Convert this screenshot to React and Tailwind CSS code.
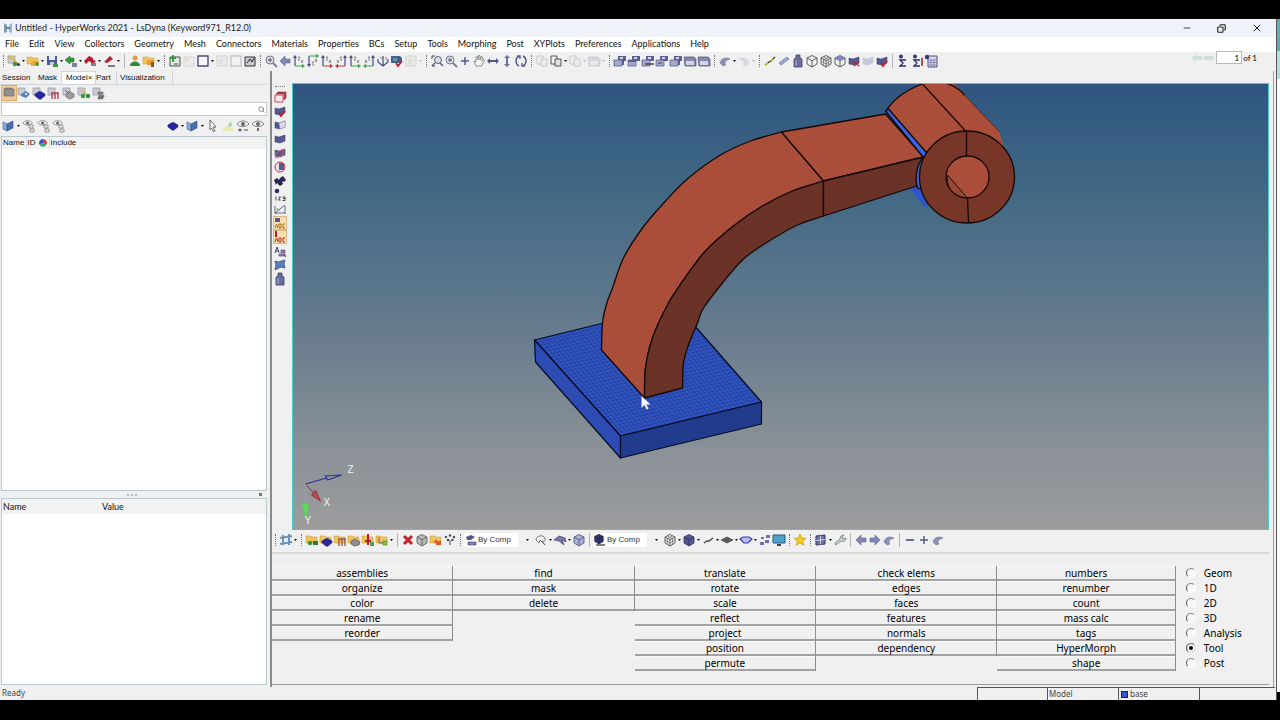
import { useState } from 'react';
import { Minus, X, Copy, Search } from 'lucide-react';

// Small shapes shared by several toolbar glyphs
const Folder = () => <path d="M1 3h5l1 1h5v6H1z" fill="#f0c35c" stroke="#c9973a" strokeWidth=".5" />;
const Page = () => <path d="M1 2h7v7H1z" fill="#c9ccd6" stroke="#8f93a3" strokeWidth=".7" />;
const Check = () => <path d="M6 9l2 3 4-5" fill="none" stroke="#c01f2c" strokeWidth="1.8" />;
const Slab = () => <path d="M2 4l4 1 6-2v6l-5 2-5-1z" fill="#55588f" stroke="#33366b" strokeWidth=".5" />;
const Cube = ({ fill = 'none', stroke = '#3c3c3c' }) => (
    <>
        <path d="M7 1.500l5 2.500v6l-5 3-5-3V4z" fill={fill} stroke={stroke} strokeWidth=".8" />
        <path d="M2 4l5 2.700 5-2.700M7 6.700V13" fill="none" stroke={stroke} strokeWidth=".8" />
    </>
);
const Disc = ({ fill = '#26269e' }) => (
    <path d="M1 6l5-3h2l5 3v2l-5 4H6L1 8z" fill={fill} stroke="#14145c" strokeWidth=".5" />
);
const Axes = ({ color, flip }) => (
    <g transform={flip ? 'matrix(-1 0 0 1 14 0)' : undefined}>
        <path d="M3 12V2M1.500 4L3 2l1.500 2" fill="none" stroke="#4a4a8a" strokeWidth="1.200" />
        <path d="M3 12h9M10 10.500l2 1.500-2 1.500" fill="none" stroke={color} strokeWidth="1.200" />
        <path d="M6 3h2l-2 3h2M9 6l2 3M11 6L9 9" fill="none" stroke="#666" strokeWidth=".7" />
    </g>
);
const Panes = ({ children }) => (
    <>
        <path d="M5 2h8v5H5z" fill="#5c5f94" />
        <path d="M7 3h3v2H7z" fill="#d5d7e8" />
        <path d="M1 6h8v6H1z" fill="#a4a8c8" stroke="#5c5f94" strokeWidth=".8" />
        {children}
    </>
);
const Undo = () => <path d="M2 9c1-5 6-6 10-4l-2 1c-2 0-3 1-3 4l1 1-3 1-2-2z" fill="#8c90b8" stroke="#65688f" strokeWidth=".5" />;
const Eye = () => (
    <>
        <path d="M1 5c3-4 9-4 12 0-3 3.500-9 3.500-12 0z" fill="#f4f4f4" stroke="#666" strokeWidth=".8" />
        <circle cx="7" cy="5" r="2" fill="#666" />
    </>
);
const Sigma = () => (
    <>
        <circle cx="5" cy="2.500" r="2" fill="#35357e" />
        <path d="M10 6H4l3 3-3 3h6" fill="none" stroke="#2d2d66" strokeWidth="1.300" />
    </>
);

const GLYPHS = {
    newModel: <><Page /><path d="M2 2l9 8" stroke="#e0b53c" strokeWidth="2" /><circle cx="8" cy="10" r="2.300" fill="#3d9b3a" /><circle cx="11.500" cy="10.500" r="1.600" fill="#35357e" /></>,
    open: <><Folder /><path d="M5 7h8v5H5z" fill="#e7a93b" /><circle cx="11" cy="10" r="1.800" fill="#3d9b3a" /></>,
    save: <><path d="M2 2h10v9H2z" fill="#4d5c96" /><path d="M4 2h6v4H4z" fill="#e8eaf4" /><path d="M5 8h4v3H5z" fill="#c8ccdf" /><path d="M8 10h5v3H8z" fill="#3d9b3a" /></>,
    importFile: <><path d="M1 6l5-4v2h4v4H6v2z" fill="#2f9a3a" stroke="#196b22" strokeWidth=".5" /><path d="M8 9h5v4H8z" fill="#7b8299" /></>,
    exportFile: <><path d="M1 7l5-5 4 2v2l3 1-3 3-4-3-3 3z" fill="#b51e2e" /><path d="M8 9h5v3H8z" fill="#7b8299" /></>,
    publish: <><path d="M2 8l6-6 3 3-6 4z" fill="#b51e2e" /><path d="M6 12h7" stroke="#555" strokeWidth="1.500" /></>,
    user: <><circle cx="7" cy="4" r="2.500" fill="#e39b3c" /><path d="M2 12c0-6 10-6 10 0z" fill="#2f8a3a" /></>,
    folders: <><Folder /><path d="M5 6h7v5H5z" fill="#f0982f" /><path d="M9 8h3v5H9z" fill="#8b5a2b" /></>,
    addPage: <><path d="M2 3h10v9H2z" fill="#dfe7df" stroke="#44544c" /><path d="M5 1v7M2 4h6" stroke="#2f9a3a" strokeWidth="1.800" /><path d="M6 10h4" stroke="#555" /></>,
    delPage: <><path d="M2 3h10v9H2z" fill="#e8e8e8" stroke="#888" /><path d="M3 4l4 4M7 4L3 8" stroke="#c0606a" /></>,
    layout: <path d="M2 2h10v10H2z" fill="#f7f7fb" stroke="#4a4d78" strokeWidth="1.400" />,
    panel: <><path d="M2 2h10v10H2z" fill="#e0e0e0" stroke="#777" /><path d="M4 5h4v5H4z" fill="#aaa" /></>,
    reload: <><path d="M2 3h10v9H2z" fill="#c9c9d2" stroke="#333" /><path d="M4 9l3-4 2 3 2-4" fill="none" stroke="#222" /></>,
    zoomIn: <><circle cx="6" cy="6" r="4" fill="#dadde6" stroke="#777a94" /><path d="M9 9l4 4" stroke="#777a94" strokeWidth="1.800" /><path d="M4 6h4M6 4v4" stroke="#555" /></>,
    back: <path d="M2 7l5-5v3h5v4H7v3z" fill="#8087b5" stroke="#5b6191" strokeWidth=".6" />,
    forward: <path d="M12 7L7 2v3H2v4h5v3z" fill="#8087b5" stroke="#5b6191" strokeWidth=".6" />,
    axXZ: <Axes color="#3aa549" />,
    axXZflip: <g transform="matrix(1 0 0 -1 0 14)"><Axes color="#3aa549" /></g>,
    axZX: <Axes color="#b8323c" />,
    axZXflip: <Axes color="#b8323c" flip />,
    axYZ: <Axes color="#3aa549" />,
    axYZflip: <Axes color="#3aa549" flip />,
    axIso: <><path d="M7 12V2M7 12L2 8V5M7 12l5-4V5" fill="none" stroke="#4a4a8a" strokeWidth="1.200" /><path d="M4 3l2 2M10 3v3" stroke="#666" strokeWidth=".8" /></>,
    viewCheck: <><path d="M1 2h9l2 2v5H1z" fill="#4a5d8c" /><path d="M3 4h4v3H3z" fill="#58a0a0" /><Check /></>,
    zoomBox: <><path d="M2 2h3M2 2v3M2 12h3" stroke="#444" fill="none" /><circle cx="8" cy="6" r="3.500" fill="#d8dae8" stroke="#5a5d80" /><path d="M5 9l-3 3M10 9l3 3" stroke="#5a5d80" strokeWidth="1.500" /></>,
    plus: <path d="M7 3v8M3 7h8" stroke="#55588f" strokeWidth="1.500" />,
    minus: <path d="M3 7h8" stroke="#55588f" strokeWidth="1.800" />,
    hand: <path d="M4 12L2 7l2 1V3l1.500-.5L6 6l.5-4.500 1.500 0V6l1-3.500 1.500.5-.5 4 1.500-1.500 1 .5-3 6z" fill="#f5f5f5" stroke="#777" strokeWidth=".8" />,
    arrowsH: <path d="M1 7l3-3v2h6V4l3 3-3 3V8H4v2z" fill="#55588f" />,
    arrowsV: <path d="M7 1l3 3H8v6h2l-3 3-3-3h2V4H4z" fill="#6b6ea0" />,
    rotate: <path d="M5 2C1 4 1 10 5 12M9 2c4 2 4 8 0 10M3 2h3v3M11 12H8V9" fill="none" stroke="#55588f" strokeWidth="1.400" />,
    pages: <><path d="M2 2h6v8H2z" fill="#f4f4f4" stroke="#555" /><path d="M6 5h6v7H6z" fill="#e2e2ea" stroke="#555" /></>,
    win1: <Panes><path d="M10 7v4" stroke="#5c5f94" strokeWidth="2" /></Panes>,
    win2: <Panes><path d="M1 6h8v2H1z" fill="#5c5f94" /></Panes>,
    win3: <Panes><path d="M4 10h9" stroke="#444" strokeWidth="1.500" /></Panes>,
    win4: <Panes><path d="M3 9h4" stroke="#444" /></Panes>,
    win5: <><path d="M1 3h10l2 2v7H2z" fill="#8588ae" stroke="#4b4e7a" strokeWidth=".7" /><path d="M3 7h8v4H3z" fill="#d3d5e4" /></>,
    undo: <Undo />,
    redo: <g transform="matrix(-1 0 0 1 14 0)"><Undo /></g>,
    line: <><path d="M2 11l4-3 2-1 4-4" stroke="#3a3a2a" strokeWidth="1.300" fill="none" /><path d="M2 11l3-2M8 7l2-2" stroke="#b6c420" strokeWidth="2" /></>,
    beam: <path d="M2 9l8-6 2 2-8 6z" fill="#a4a8d4" stroke="#6b6ea0" strokeWidth=".7" />,
    bottle: <><path d="M5 1h4v3l2 1v8H3V5l2-1z" fill="#6a6d9c" stroke="#3d3f6c" strokeWidth=".8" /><path d="M5 6v6" stroke="#b4b7d8" /></>,
    cube: <Cube />,
    cubeMesh: <><Cube /><path d="M4.500 3l5 2.700v6M9.500 3l-5 2.700v6M2 7l5 3 5-3" stroke="#555" fill="none" strokeWidth=".6" /></>,
    cubeTop: <><Cube /><path d="M7 1.500L12 4 7 6.700 2 4z" fill="#8087c8" /></>,
    cubeSolid: <Cube fill="#55588f" stroke="#2e3060" />,
    cubeSoft: <Cube fill="#aab0d8" stroke="#4c5080" />,
    cubeGrey: <Cube fill="#b9b9b9" stroke="#555" />,
    slabCheck: <><Slab /><Check /></>,
    slabX: <><Slab /><path d="M7 8l5 4M12 8l-5 4" stroke="#c01f2c" strokeWidth="1.500" /></>,
    slab: <Slab />,
    slabHalf: <><Slab /><path d="M6 5l6-2v6l-5 2z" fill="#dcdde8" stroke="#8a8ca8" strokeWidth=".5" /></>,
    sigma: <Sigma />,
    sigmaI: <><Sigma /><path d="M12 4v8" stroke="#c01f2c" strokeWidth="1.600" /></>,
    calc: <><path d="M4 2h9v11H4z" fill="#d7d9e8" stroke="#4b4e7a" /><path d="M5 6h7M5 8.500h7M5 11h7M7 5v7M10 5v7" stroke="#6b6ea0" strokeWidth=".7" /><circle cx="3" cy="3" r="2.200" fill="#35357e" /></>,
    modelView: <path d="M2 3h10v7H2zM2 3l2-1h5l1 1" fill="#8f9096" stroke="#616268" strokeWidth=".6" />,
    treeBlue: <><Page /><path d="M4 8l5-3 4 3-4 4-5-2z" fill="#5682ba" /><circle cx="9" cy="8" r="1" fill="#fff" /></>,
    treeDisc: <><Page /><g transform="translate(2 3) scale(.85)"><Disc /></g></>,
    treeRed: <><Page /><path d="M4 7h8M5 7v6M8 7v6M11 7v6" stroke="#b8434c" strokeWidth="1.400" /></>,
    treeGrey: <><Page /><path d="M4 8l3-3 5 3v3l-4 2-4-2z" fill="#9e9e9e" stroke="#555" strokeWidth=".6" /><path d="M3 4l4 4" stroke="#b8434c" /></>,
    treeGreen: <><Page /><path d="M4 4l5 4" stroke="#e0b53c" strokeWidth="1.600" /><circle cx="6" cy="10" r="2.300" fill="#3d9b3a" /><circle cx="11" cy="10" r="2.200" fill="#2f8a3a" /></>,
    treeStack: <><Page /><path d="M6 6h5v2H6zM7 9h5v2H7zM6 11h5v2H6z" fill="#888" stroke="#555" strokeWidth=".5" /></>,
    book: <><path d="M1 3l4 2v7l-4-2z" fill="#8fb0dc" stroke="#31568f" strokeWidth=".6" /><path d="M5 5l6-3v7l-6 3z" fill="#4a6fae" stroke="#2b4a80" strokeWidth=".6" /></>,
    eyeTree: <><g transform="scale(.8)"><Eye /></g><path d="M7 6h4v3H7zM8 10h4v3H8z" fill="#e8e8e8" stroke="#777" strokeWidth=".7" /></>,
    disc: <g transform="translate(1 1) scale(.85)"><Disc /></g>,
    cursor: <path d="M4 1l6 7H7l2 4-1.500.8L5.500 9 4 10.500z" fill="#fff" stroke="#444" strokeWidth=".8" />,
    pick: <><path d="M2 8h10v4H2z" fill="#e6ebb0" /><path d="M6 8l4-6 1 5z" fill="#a8d49c" /></>,
    eyePm: <><Eye /><path d="M2 11h4M4 9.500v3M8 11h4" stroke="#444" /></>,
    eyeMinus: <><Eye /><path d="M7 9v3" stroke="#444" strokeWidth="1.500" /></>,
    wheel: <><path d="M7 7V2a5 5 0 0 1 4.500 7z" fill="#d2404c" /><path d="M7 7l4.500 2a5 5 0 0 1-9 0z" fill="#35a86c" /><path d="M7 7L2.500 9A5 5 0 0 1 7 2z" fill="#3b4fc0" /></>,
    boxRed: <><path d="M2 5h8v7H2z" fill="#f4eaee" stroke="#d4404c" /><path d="M3 4l2-2h8v6l-2 2V4z" fill="#8a3f62" stroke="#c4323e" strokeWidth=".7" /></>,
    slabPink: <><Slab /><path d="M2 8l8-5v6l-7 3z" fill="none" stroke="#d4606a" /></>,
    sphereRed: <><circle cx="7" cy="7" r="5" fill="#f0e0e4" stroke="#c4323e" /><path d="M6 3h5v7H6z" fill="#55588f" /></>,
    binoculars: <path d="M1 6l3-2 2 2 1-2 3-2 3 4-2 2-2-1 1 3-3 2-3-3-1 2z" fill="#26284e" />,
    info: <><circle cx="4" cy="3" r="2.300" fill="#2c2c80" /><path d="M3 8.500v4M5.500 9h2l-2 3h2M9.500 9h2.500v3.500H9.500M10 10.500h2" fill="none" stroke="#333" strokeWidth=".9" /></>,
    measure: <><path d="M2 11L12 3M2 4v8M12 4v8M2 11h10" fill="none" stroke="#44486c" strokeWidth=".8" /><path d="M4 6l2 3" stroke="#3aa549" /></>,
    labelBlue: <><path d="M2 2h5v4H2z" fill="#55588f" /><path d="M2 12l1.500-4L5 12M6 8v4h2V8zM12 8h-2v4h2" fill="none" stroke="#a47016" /></>,
    labelRed: <><path d="M3 1v6" stroke="#b51e2e" strokeWidth="2" /><path d="M2 12l1.500-4L5 12M6 8v4h2V8zM12 8h-2v4h2" fill="none" stroke="#b5301e" /></>,
    notes: <><path d="M2 9l2-6 2 6M3 7h3" fill="none" stroke="#44487e" /><path d="M8 6h4v3H8zM6 10h6v2H6z" fill="#8086b4" stroke="#44487e" strokeWidth=".6" /><path d="M11 10l2 3" stroke="#c01f2c" /></>,
    patch: <path d="M2 3l3 1 7-2-1 4 1 4-4-1-6 3 1-5z" fill="#5c7fb8" stroke="#32508a" strokeWidth=".8" />,
    gear: <><path d="M4 2v10M10 1v11M1 5l12-2M1 11l12-2" stroke="#6d93b4" strokeWidth="2" /><path d="M5.500 5.500h3v3h-3z" fill="#dce8f0" /></>,
    compA: <><Folder /><circle cx="5" cy="10" r="2.300" fill="#2f9a3a" /><path d="M8 8h5v4H8z" fill="#2f7d3a" /></>,
    compB: <><Folder /><g transform="translate(2 3) scale(.85)"><Disc /></g></>,
    compC: <><Folder /><path d="M5 6h8M6 6v7M9 6v7M12 6v7" stroke="#9d5a50" strokeWidth="1.400" /></>,
    compD: <><Folder /><path d="M4 8l4-2 5 3-1 3-5 1-3-2z" fill="#8c8c9a" stroke="#444" strokeWidth=".6" /></>,
    compE: <><Folder /><path d="M7 1v11M4 8h6" stroke="#b51e2e" strokeWidth="2" /><path d="M9 9h4v4H9z" fill="#4ea548" /></>,
    compF: <><Folder /><path d="M4 4v6h5" stroke="#666" fill="none" /><path d="M8 8h4v4H8z" fill="#7fc23f" stroke="#477f22" strokeWidth=".6" /></>,
    delete: <path d="M3 3l8 8M11 3l-8 8" stroke="#c4202e" strokeWidth="3" />,
    folderMove: <><Folder /><path d="M4 9l4-3v2h4v4H7v-2z" fill="#e2572a" /></>,
    nodes: <g fill="#4a4a60"><circle cx="3" cy="4" r="1.200" /><circle cx="7" cy="2.500" r="1.200" /><circle cx="11" cy="4" r="1.200" /><circle cx="5" cy="7" r="1.200" /><circle cx="9.500" cy="7" r="1.200" /><path d="M6.500 7h1v5h-1z" /></g>,
    swatch: <><path d="M2 4l5-2 4 2-4 3H3z" fill="#55588f" /><path d="M4 9h8v3H4z" fill="#8185ae" stroke="#33366b" strokeWidth=".6" /></>,
    cubeSwatch: <><g transform="scale(.85)"><Cube fill="#33366b" stroke="#1c1e4a" /></g><path d="M3 12h9" stroke="#555" strokeWidth="1.500" /></>,
    lasso: <path d="M2 7c0-4 7-6 9-2 1 3-2 4-3 3l3 4-5-5-1 3z" fill="#f4f4f4" stroke="#666" strokeWidth=".9" />,
    shaded: <path d="M1 7l5-4 6 2 1 4-4-2 2 5-5-4z" fill="#777aa8" stroke="#3d3f6c" strokeWidth=".7" />,
    dash: <path d="M3 10l3-2h2l4-3" fill="none" stroke="#444" strokeWidth="1.400" />,
    plate: <path d="M1 7l6-3 6 3-6 3z" fill="#5a5d5a" stroke="#333" strokeWidth=".6" />,
    shell: <path d="M1 6l3-2h6l3 2-4 4H5z" fill="#b6baf0" stroke="#3a3f9c" strokeWidth="1.200" />,
    dots: <path d="M8 2h4v3H8zM3 4h3v2H3zM7 7h4v3H7zM2 9h4v3H2z" fill="#6b70b4" />,
    screen: <><path d="M1 2h12v8H1z" fill="#4fa0c8" stroke="#285a7a" /><path d="M5 12h4" stroke="#333" strokeWidth="1.800" /></>,
    star: <path d="M7 1l1.700 4 4.300.3-3.300 2.700 1.100 4.300L7 10l-3.800 2.300 1.100-4.300L1 5.300 5.300 5z" fill="#f2cc1c" stroke="#b8920f" strokeWidth=".6" />,
    grid: <><path d="M2 3l9-1v9l-9 1z" fill="#6c70a4" stroke="#33366b" /><path d="M2 7.500l9-1M6.500 2.500v9" stroke="#e8e8f4" strokeWidth=".8" /></>,
    wrench: <path d="M3 12l-1-2 5-4c0-3 2-4 4-4l-2 2 1 2 3-1c0 3-3 4-5 3z" fill="#cfd4d6" stroke="#6d7578" strokeWidth=".8" />,
};

// "|" is a separator and ":" a drag grip; the rest are [glyph, options]
const MAIN_BAR = [
    ':', ['newModel', 'v'], ['open', 'v'], ['save', 'v'], ['importFile', 'v'], ['exportFile', 'v'], ['publish', 'v'],
    '|', ['user'], ['folders', 'v'],
    ':', ['addPage'], ['delPage', 'd'], ['layout', 'v'], ['panel', 'd'], ['layout', 'd'], ['reload'],
    ':', ['zoomIn'], ['back'], ['axXZ'], ['axXZflip'], ['axZX'], ['axZXflip'], ['axYZ'], ['axYZflip'], ['axIso'], ['viewCheck'], ['panel', 'vd'],
    ':', ['zoomBox'], ['zoomIn'], ['plus'], ['hand'], ['arrowsH'], ['arrowsV'], ['rotate'],
    ':', ['pages', 'd'], ['pages', 'v'], ['pages', 'vd'], ['win5', 'vd'],
    ':', ['win1'], ['win2'], ['win3'], ['win4'], ['win1'], ['win5'], ['win5'],
    ':', ['undo', 'v'], ['redo', 'vd'],
    ':', ['line'], ['beam'], ['bottle'], ['cube'], ['cubeMesh'], ['cubeTop'], ['slabX'], ['slab', 'd'], ['slabCheck'],
    '|', ['sigma'], ['sigmaI'], ['calc'],
];

const SIDE_BAR = [
    ['boxRed'], ['slabCheck'], ['slabHalf'], ['slab'], ['slabPink'], ['sphereRed'], ['binoculars'], ['info'], ['measure'],
    ['labelBlue', 's'], ['labelRed', 's'], ['notes'], ['patch'], ['bottle'],
];

const VIEW_BAR_A = [
    ':', ['gear', 'v'],
    ':', ['compA'], ['compB'], ['compC'], ['compD'], ['compE'], ['compF', 'v'],
    '|', ['delete'], ['cubeGrey'], ['folderMove'], ['nodes'],
    ':',
];
const VIEW_BAR_B = [['lasso', 'v'], ['shaded', 'v'], ['cubeSoft'], '|'];
const VIEW_BAR_C = [
    ['cubeMesh', 'v'], ['cubeSolid', 'v'], ['dash', 'v'], ['plate', 'v'], ['shell', 'v'], ['dots'], ['screen'],
    ':', ['star'],
    ':', ['grid', 'v'], ['wrench'],
    '|', ['back'], ['forward'], ['undo'],
    '|', ['minus'], ['plus'], ['undo'],
];

const MENUS = [
    'File', 'Edit', 'View', 'Collectors', 'Geometry', 'Mesh', 'Connectors', 'Materials', 'Properties', 'BCs',
    'Setup', 'Tools', 'Morphing', 'Post', 'XYPlots', 'Preferences', 'Applications', 'Help',
];

const COMMANDS = [
    ['assemblies', 'organize', 'color', 'rename', 'reorder'],
    ['find', 'mask', 'delete'],
    ['translate', 'rotate', 'scale', 'reflect', 'project', 'position', 'permute'],
    ['check elems', 'edges', 'faces', 'features', 'normals', 'dependency'],
    ['numbers', 'renumber', 'count', 'mass calc', 'tags', 'HyperMorph', 'shape'],
];

const PAGES = ['Geom', '1D', '2D', '3D', 'Analysis', 'Tool', 'Post'];

const Glyph = ({ name }) => (
    <svg viewBox="0 0 14 14" className="w-3.5 h-3.5 shrink-0" aria-hidden="true">{GLYPHS[name]}</svg>
);

const Caret = () => (
    <svg viewBox="0 0 5 4" className="w-[5px] h-1 shrink-0" aria-hidden="true"><path d="M1 1h3L2.500 3z" fill="#111" /></svg>
);

const ToolButton = ({ name, flags = '' }) => (
    <button
        type="button"
        aria-label={name}
        disabled={flags.includes('d')}
        className={`flex items-center shrink-0 disabled:opacity-25 ${flags.includes('s') ? 'bg-[#f7dfb0] outline outline-[#d9b98a] -outline-offset-1' : ''}`}
    >
        <Glyph name={name} />
        {flags.includes('v') && <Caret />}
    </button>
);

const ToolItems = ({ items }) => items.map((item, i) => {
    if (item === ':') return <span key={i} className="w-[7px] h-3 shrink-0 flex justify-center"><i className="border-l border-dotted border-[#777]" /></span>;
    if (item === '|') return <span key={i} className="w-[7px] h-3.5 shrink-0 flex justify-center"><i className="border-l border-[#b5b5b5]" /></span>;
    return <ToolButton key={i} name={item[0]} flags={item[1]} />;
});

const ByComp = ({ icon, label }) => (
    <div className="flex items-center shrink-0 w-[70px] h-3.5 relative">
        <div className="absolute inset-y-0 left-0 w-[54px] bg-white" />
        <span className="relative"><Glyph name={icon} /></span>
        <select aria-label={label} className="relative flex-1 min-w-0 appearance-none bg-transparent font-['Liberation_Sans',sans-serif] text-[8px] leading-3 text-[#333]">
            <option>By Comp</option>
        </select>
        <span className="relative mr-1"><Caret /></span>
    </div>
);

const TitleBar = () => (
    <header className="flex items-center h-[18px] shrink-0 bg-[#eff3f9] pl-[3px] text-[9px] text-[#222]">
        <svg viewBox="0 0 10 10" className="w-2.5 h-2.5 mr-0.5" aria-hidden="true">
            <path d="M1 0l3 2v7L1 10z" fill="#7f9ab4" />
            <path d="M9 0L6 2v7l3 1z" fill="#9fb4c8" />
            <path d="M3 4h4v2H3z" fill="#5d7f9e" />
        </svg>
        <h1>Untitled - HyperWorks 2021 - LsDyna (Keyword971_R12.0)</h1>
        <div className="ml-auto flex items-center gap-[25px] pr-[13px]">
            <button type="button" aria-label="Minimize"><Minus size={10} strokeWidth={2} /></button>
            <button type="button" aria-label="Restore"><Copy size={9} strokeWidth={3} className="-scale-x-100" /></button>
            <button type="button" aria-label="Close"><X size={12} strokeWidth={2} /></button>
        </div>
    </header>
);

const MenuBar = () => (
    <nav className="flex items-center gap-2.5 h-[15px] shrink-0 bg-white pl-[5px] pb-px text-[9px] leading-3 text-[#111]">
        {MENUS.map(m => <button key={m} type="button">{m}</button>)}
    </nav>
);

const MainToolbar = () => (
    <div className="flex items-center h-[19px] shrink-0 pb-0.5">
        <ToolItems items={MAIN_BAR} />
        <div className="ml-auto mr-[19px] mb-1.5 flex items-center text-[9px]">
            <button type="button" aria-label="Previous page" disabled className="opacity-60 text-[#b4d6d2]">
                <svg viewBox="0 0 13 10" className="w-[13px] h-2.5"><path d="M1 5l5-4v2h6v4H6v2z" fill="currentColor" /></svg>
            </button>
            <button type="button" aria-label="Next page" disabled className="opacity-60 text-[#b4d6d2]">
                <svg viewBox="0 0 13 10" className="w-[13px] h-2.5"><path d="M12 5L7 1v2H1v4h6v2z" fill="currentColor" /></svg>
            </button>
            <input id="page" defaultValue="1" className="w-[26px] h-[13px] mr-px bg-white border border-[#b8b8b8] text-right text-[8px] pr-0.5" />
            <label htmlFor="page" className="text-[8px]">of 1</label>
        </div>
    </div>
);

const Browser = () => (
    <aside className="flex flex-col w-[267px] shrink-0 font-['Liberation_Sans',sans-serif] text-[8px] leading-[10px] text-[#111]">
        <div className="flex items-center h-[13px] shrink-0 whitespace-nowrap">
            <button type="button" className="w-[31px] text-left pl-0.5">Session</button>
            <button type="button" className="w-[30px] text-left pl-[7px]">Mask</button>
            <button type="button" className="h-full w-[35px] bg-white text-left pl-1 border-x border-t border-[#cfd5d8]">Model×</button>
            <button type="button" className="w-5 text-left">Part</button>
            <button type="button" className="h-full w-[57px] border-x border-[#cfd5d8] text-left pl-[3px]">Visualization</button>
        </div>
        <div className="flex items-center gap-px h-4 shrink-0 pl-0.5 mb-0.5 border-t border-[#cfd5d8]">
            <span className="bg-[#f3c998] outline outline-[#e0ab6c] h-3.5"><ToolButton name="modelView" /></span>
            <ToolItems items={[['treeBlue'], ['treeDisc'], ['treeRed'], ['treeGrey'], ['treeGreen'], ['treeStack']]} />
        </div>
        <label className="flex items-center h-3.5 shrink-0 ml-px bg-white border border-[#c3cdd0]">
            <input type="search" aria-label="Search model" className="flex-1 min-w-0 h-full outline-none pl-1" />
            <Search size={7} className="mr-px text-[#444]" />
        </label>
        <div className="flex items-center h-5 shrink-0 pl-0.5 pr-0.5 gap-px">
            <ToolItems items={[['book', 'v'], ['eyeTree'], ['eyeTree'], ['eyeTree']]} />
            <span className="flex-1" />
            <ToolItems items={[['disc', 'v'], ['book', 'v'], ['cursor'], ['pick'], ['eyePm'], ['eyeMinus']]} />
        </div>
        <div className="flex-[357] min-h-0 ml-px bg-white border border-[#b9c8cc]">
            <table className="w-full bg-[#f3f2f2]">
                <thead>
                    <tr className="h-3 text-left">
                        <th className="font-normal w-[24px] pl-px border-r border-[#d5dadb]">Name</th>
                        <th className="font-normal w-[11px] pl-px">ID</th>
                        <th className="w-3"><svg viewBox="2 1 10 12" className="w-2 h-2.5 mx-auto">{GLYPHS.wheel}</svg></th>
                        <th className="font-normal pl-px border-l border-[#d5dadb]">Include</th>
                    </tr>
                </thead>
            </table>
        </div>
        <div className="flex items-center h-[7px] shrink-0 text-[#999]">
            <span className="flex gap-0.5 mx-auto pl-1"><i className="size-0.5 bg-[#bbb]" /><i className="size-0.5 bg-[#bbb]" /><i className="size-0.5 bg-[#bbb]" /></span>
            <i className="size-[3px] bg-[#777] mr-[5px]" />
        </div>
        <div className="flex-[187] min-h-0 ml-px mb-0.5 bg-white border border-[#b9c8cc] font-['Lato',sans-serif] text-[9px]">
            <table className="w-full bg-[#f3f2f2]">
                <thead>
                    <tr className="h-[15px] text-left">
                        <th className="font-normal w-[100px] pl-px">Name</th>
                        <th className="font-normal">Value</th>
                    </tr>
                </thead>
            </table>
        </div>
    </aside>
);

// Catmull-Rom spline through the points, written as cubic segments
const spline = (pts) => pts.slice(1).map((p, i) => {
    const a = pts[i];
    const before = pts[i - 1] || a;
    const after = pts[i + 2] || p;
    const c1 = [a[0] + (p[0] - before[0]) / 6, a[1] + (p[1] - before[1]) / 6];
    const c2 = [p[0] - (after[0] - a[0]) / 6, p[1] - (after[1] - a[1]) / 6];
    return `C${c1} ${c2} ${p}`;
}).join('');

const OUTER = [[601, 350], [602, 323], [606, 304], [612, 288], [623, 258], [642, 228], [665, 201], [688, 178], [720, 155], [750, 141], [781, 132]];
const FRONT = [[823, 181], [792, 191], [762, 206], [733, 226], [705, 251], [683, 280], [667, 305], [652, 338], [645, 368], [644, 398]];
const INNER = [[682, 388], [683, 363], [688, 345], [697, 323], [703, 308], [722, 283], [743, 259], [767, 242], [797, 225], [823, 216]];

const Viewport = () => (
    <svg viewBox="292 84 976 445" preserveAspectRatio="xMidYMid slice" className="absolute inset-0 w-full h-full" role="img" aria-label="Bracket model">
        <defs>
            <linearGradient id="sky" x1="0" y1="0" x2="0" y2="1">
                <stop offset="0" stopColor="#2f5580" />
                <stop offset=".22" stopColor="#3f6783" />
                <stop offset=".55" stopColor="#667b8e" />
                <stop offset=".82" stopColor="#8a9197" />
                <stop offset="1" stopColor="#9c9c9c" />
            </linearGradient>
            <pattern id="blueMesh" width="4" height="4" patternUnits="userSpaceOnUse" patternTransform="matrix(.66 .75 .97 -.23 534 339)">
                <path d="M0 0h4v4H0z" fill="#3054c0" />
                <path d="M0 0h4M0 0v4" stroke="#182f86" strokeWidth=".9" />
            </pattern>
            <pattern id="redMesh" width="3" height="3" patternUnits="userSpaceOnUse" patternTransform="matrix(.66 .75 .5 -.86 601 350)">
                <path d="M0 0h3v3H0z" fill="#b2523d" />
                <path d="M0 0h3M0 0v3" stroke="#8c3f2f" strokeWidth=".7" />
            </pattern>
            <pattern id="redMeshFlat" width="3" height="3" patternUnits="userSpaceOnUse" patternTransform="matrix(.66 .75 .97 -.2 781 132)">
                <path d="M0 0h3v3H0z" fill="#b2523d" />
                <path d="M0 0h3M0 0v3" stroke="#8f4231" strokeWidth=".7" />
            </pattern>
        </defs>
        <path d="M-1000 84h4000v445h-4000z" fill="url(#sky)" />

        {/* base plate */}
        <g stroke="#070b24" strokeWidth="1.200" strokeLinejoin="round">
            <path d="M534 340L676 305L761 402L620 436z" fill="url(#blueMesh)" />
            <path d="M534 340L620 436V458L535 362z" fill="#2c4cb4" />
            <path d="M620 436L761 402V424L620 458z" fill="#213c8c" />
        </g>

        {/* pin boss, behind the arm */}
        <path d="M907 186L925 208L945 190L920 175z" fill="#2f55c8" />
        <path d="M885 112C892 100 906 90 922 84L926 80H948C956 86 961 90 964 95L999 132L1004 150L967 190L925 160z" fill="url(#redMeshFlat)" />
        <path d="M885 112C892 100 906 90 922 84M940 82C952 84 960 90 964 95" fill="none" stroke="#140806" strokeWidth="1.300" />
        <path d="M964 95L999 132" stroke="#5c261c" strokeWidth="1" />
        <path d="M922 84L966 132" stroke="#1a0a08" strokeWidth="1.300" />

        {/* arm */}
        <g stroke="#140806" strokeWidth="1.300" strokeLinejoin="round">
            <path d={`M601 350${spline(OUTER)}L823 181${spline(FRONT)}z`} fill="url(#redMesh)" />
            <path d={`M682 388${spline(INNER)}L823 181${spline(FRONT)}z`} fill="#6b3228" />
            <path d="M781 132L885 114L923 157L823 181z" fill="url(#redMeshFlat)" />
            <path d="M823 181L923 157L916 186L823 216z" fill="#6b3228" />
            <path d="M885 111L888 109L929 156L925 160z" fill="#3a63dc" />
            <path d="M923 157C916 165 914 178 917 188L923 190L928 159z" fill="#3a63dc" />
        </g>
        <ellipse cx="966.500" cy="177" rx="47.500" ry="46" fill="#783629" stroke="#140806" strokeWidth="1.300" />
        <ellipse cx="967" cy="177" rx="21.500" ry="21" fill="url(#redMeshFlat)" stroke="#140806" strokeWidth="1.300" />
        <path d="M947 175C945 188 954 197 967 198z" fill="#9a4635" stroke="#140806" />
        <path d="M966 132V156M967 198L968 222" stroke="#140806" strokeWidth="1.300" />

        {/* axis triad */}
        <g strokeWidth="1" fontFamily="Liberation Sans, sans-serif" fontSize="10">
            <path d="M305 484L326 478M325 476L341 475L327 480z" fill="none" stroke="#2c2ca4" strokeWidth="1.200" />
            <path d="M305 484L313 493M311 495L315 490L320 501z" fill="#a85058" stroke="#b02a38" />
            <path d="M305 484V504M302 504h6l-2.500 13z" fill="#5ee05e" stroke="#52d852" />
            <g fill="#f2f2f2">
                <text x="347" y="473">Z</text>
                <text x="323" y="506">X</text>
                <text x="304" y="524">Y</text>
            </g>
        </g>

        <path d="M641 396v12l3-3 2 4.500 2-1-2-4h4z" fill="#fff" stroke="#888" strokeWidth=".4" />
    </svg>
);

const ViewToolbar = () => (
    <div className="flex items-center h-[19px] shrink-0">
        <ToolItems items={VIEW_BAR_A} />
        <ByComp icon="swatch" label="Color geometry" />
        <ToolItems items={VIEW_BAR_B} />
        <ByComp icon="cubeSwatch" label="Color elements" />
        <ToolItems items={VIEW_BAR_C} />
    </div>
);

const CommandPanel = () => {
    const [page, setPage] = useState('Tool');

    return (
        <section className="mt-[3px] mr-1 mb-0.5 pt-3 pb-[13px] shrink-0 grid grid-cols-[181fr_181fr_181fr_181fr_178fr_93fr] items-start border-t-2 border-t-[#d9d9d9] border-b border-b-[#9a9a9a] font-['Noto_Sans',sans-serif] text-[10px] leading-3 text-black">
            {COMMANDS.map(column => (
                <div key={column[0]} className="flex flex-col border-r border-[#8d8d8d]">
                    {column.map(cmd => (
                        <button key={cmd} type="button" className="h-[15px] border-b-2 border-b-[#a2a2a2] border-t border-t-[#fafafa]">{cmd}</button>
                    ))}
                </div>
            ))}
            <div className="flex flex-col pl-2.5">
                {PAGES.map(p => (
                    <label key={p} className="flex items-center h-[15px] pb-px gap-2">
                        <input
                            type="radio"
                            name="page"
                            checked={page === p}
                            onChange={() => setPage(p)}
                            className="appearance-none size-2.5 rounded-full bg-[#f8f8f8] border border-[#fff] border-l-[#555] border-t-[#888] checked:shadow-[inset_0_0_0_2px_#f8f8f8] checked:bg-black"
                        />
                        {p}
                    </label>
                ))}
            </div>
        </section>
    );
};

const StatusBar = () => (
    <footer className="flex items-stretch h-[13px] shrink-0 pr-px font-['Noto_Sans',sans-serif] text-[8px] leading-3 text-[#444]">
        <span className="flex-1 pl-0.5">Ready</span>
        <span className="w-[70px] border-l border-t border-[#555]" />
        <span className="w-[71px] border-l border-t border-[#555] pl-px">Model</span>
        <span className="w-[81px] border-l border-t border-[#555] pl-0.5 flex items-center gap-0.5">
            <i className="size-[7px] bg-[#3558d0] border border-[#223]" />base
        </span>
        <span className="w-[76px] border-l border-t border-[#555]" />
    </footer>
);

export default function App() {
    return (
        <div className="h-screen flex bg-black pt-[19px] pb-5 font-['Lato',sans-serif]">
            <div className="flex-1 min-w-0 flex flex-col bg-[#f0f0f0] overflow-hidden">
                <TitleBar />
                <MenuBar />
                <MainToolbar />
                <main className="flex-1 min-h-0 flex mr-0.5">
                    <Browser />
                    <div className="flex-1 min-w-0 flex flex-col ml-[3px] border-l-2 border-l-[#8a8a8a] border-r border-r-[#a0a0a0]">
                        <div className="flex-1 min-h-0 flex pt-3 pr-1">
                            <div className="flex flex-col items-center w-5 pr-1 shrink-0">
                                <i className="w-2.5 h-px mt-[3px] mb-[3px] shrink-0 border-t border-dotted border-[#777]" />
                                <ToolItems items={SIDE_BAR} />
                            </div>
                            <div className="flex-1 relative border border-[#45cfc8] overflow-hidden">
                                <Viewport />
                            </div>
                        </div>
                        <ViewToolbar />
                        <CommandPanel />
                    </div>
                </main>
                <StatusBar />
            </div>
            <div className="w-1 flex flex-col border-l border-[#555]">
                <i className="h-8 bg-[#5ab0ab]" />
                <i className="h-7 bg-[#b0e2dd]" />
                <i className="flex-1 bg-white" />
                <i className="h-2 bg-black" />
            </div>
        </div>
    );
}
